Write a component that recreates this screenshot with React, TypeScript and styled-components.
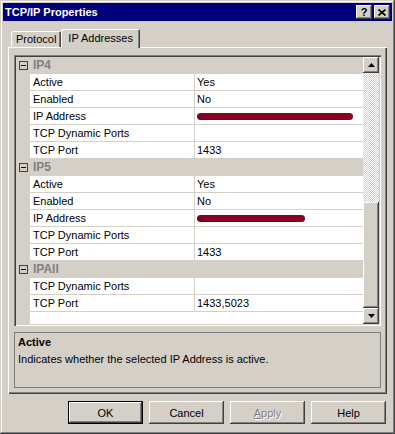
import React from "react";
import styled, { createGlobalStyle, css } from "styled-components";

const face = "#d4d0c8";
const shadow = "#808080";
const dark = "#404040";

const GlobalStyle = createGlobalStyle`
  html, body {
    margin: 0;
    padding: 0;
    background: ${face};
  }
  body {
    font-family: "Liberation Sans", Arial, sans-serif;
    font-size: 11px;
    color: #000;
  }
  * {
    box-sizing: border-box;
  }
`;

const raised = css`
  box-shadow: inset -1px -1px ${dark}, inset 1px 1px #fff,
    inset -2px -2px ${shadow}, inset 2px 2px ${face};
`;

const sunken = css`
  box-shadow: inset 1px 1px ${shadow}, inset 2px 2px ${dark},
    inset -1px -1px #fff, inset -2px -2px ${face};
`;

const Window = styled.div`
  width: 395px;
  height: 434px;
  padding: 3px;
  background: ${face};
  display: flex;
  flex-direction: column;
  box-shadow: inset -1px -1px ${dark}, inset 1px 1px ${face},
    inset -2px -2px ${shadow}, inset 2px 2px #fff;
`;

const TitleBar = styled.div`
  height: 18px;
  background: #00007c;
  color: #fff;
  display: flex;
  align-items: center;
  padding: 0 2px;
`;

const Title = styled.div`
  flex: 1;
  font-weight: bold;
  font-size: 11px;
`;

const CaptionButtons = styled.div`
  display: flex;
  gap: 2px;
`;

const CaptionButton = styled.div`
  width: 16px;
  height: 14px;
  background: ${face};
  ${raised};
  display: flex;
  align-items: center;
  justify-content: center;
  font-weight: bold;
  font-size: 11px;
  color: #000;
  line-height: 1;
`;

const Body = styled.div`
  flex: 1;
  display: flex;
  flex-direction: column;
  padding: 8px 5px 0;
`;

const TabStrip = styled.div`
  height: 18px;
  display: flex;
  align-items: flex-end;
  padding-left: 3px;
  position: relative;
  z-index: 1;
`;

const Tab = styled.div<{ $active?: boolean }>`
  height: ${(p) => (p.$active ? 19 : 16)}px;
  margin-bottom: ${(p) => (p.$active ? -1 : 0)}px;
  padding: ${(p) => (p.$active ? "3px 7px 0" : "2px 5px 0")};
  background: ${face};
  border-top-left-radius: 2px;
  border-top-right-radius: 2px;
  box-shadow: inset 1px 1px #fff, inset -1px 0 ${dark}, inset -2px 0 ${shadow};
  line-height: 13px;
  white-space: nowrap;
`;

const Panel = styled.div`
  height: 347px;
  background: ${face};
  padding: 8px 6px 3px;
  display: flex;
  flex-direction: column;
  gap: 6px;
  box-shadow: inset 1px 1px #fff, inset -1px -1px ${dark},
    inset -2px -2px ${shadow};
`;

const PropertyGrid = styled.div`
  height: 271px;
  padding: 2px;
  ${sunken};
  display: flex;
`;

const List = styled.div`
  flex: 1;
  overflow: hidden;
  background: linear-gradient(to right, ${face} 14px, #fff 14px);
`;

const Row = styled.div`
  display: grid;
  grid-template-columns: 14px 165px 1fr;
  height: 17px;
  line-height: 15px;
`;

const Gutter = styled.div`
  display: flex;
  align-items: center;
  justify-content: center;
`;

const NameCell = styled.div`
  background: #fff;
  border-bottom: 1px solid ${face};
  border-right: 1px solid ${face};
  padding: 1px 0 0 3px;
  white-space: nowrap;
`;

const ValueCell = styled.div`
  background: #fff;
  border-bottom: 1px solid ${face};
  padding: 1px 0 0 2px;
  display: flex;
  align-items: center;
  white-space: nowrap;
`;

const CategoryRow = styled(Row)`
  background: ${face};
`;

const CategoryLabel = styled.div`
  grid-column: 2 / 4;
  padding: 1px 0 0 3px;
  font-weight: bold;
  font-size: 12px;
  color: ${shadow};
`;

const Expander = styled.span`
  width: 9px;
  height: 9px;
  border: 1px solid ${dark};
  display: flex;
  align-items: center;
  justify-content: center;

  &::after {
    content: "";
    width: 5px;
    height: 1px;
    background: #000;
  }
`;

const Redacted = styled.span<{ $w: number }>`
  display: inline-block;
  width: ${(p) => p.$w}px;
  height: 7px;
  border-radius: 4px;
  background: #860020;
`;

const ScrollBar = styled.div`
  width: 16px;
  display: flex;
  flex-direction: column;
  background-color: #fff;
  background-image: conic-gradient(
    ${face} 25%,
    #fff 0 50%,
    ${face} 0 75%,
    #fff 0
  );
  background-size: 2px 2px;
`;

const ArrowButton = styled.div`
  height: 16px;
  background: ${face};
  ${raised};
  display: flex;
  align-items: center;
  justify-content: center;
`;

const Track = styled.div`
  flex: 1;
  display: flex;
  flex-direction: column;
  justify-content: flex-end;
`;

const Thumb = styled.div<{ $size: number }>`
  height: ${(p) => p.$size}px;
  background: ${face};
  ${raised};
`;

const Description = styled.div`
  height: 56px;
  border: 1px solid ${shadow};
  padding: 1px 3px 0;
  line-height: 17px;
`;

const DescTitle = styled.div`
  font-weight: bold;
`;

const ButtonRow = styled.div`
  display: flex;
  justify-content: flex-end;
  gap: 6px;
  margin-top: 7px;
  padding-right: 1px;
`;

const DialogButton = styled.div<{ $default?: boolean; $disabled?: boolean }>`
  width: 75px;
  height: 23px;
  background: ${face};
  display: flex;
  align-items: center;
  justify-content: center;
  ${(p) =>
    p.$default
      ? css`
          box-shadow: inset 0 0 0 1px #000, inset -2px -2px ${dark},
            inset 2px 2px #fff, inset -3px -3px ${shadow};
        `
      : raised};
  color: ${(p) => (p.$disabled ? shadow : "#000")};
  text-shadow: ${(p) => (p.$disabled ? "1px 1px 0 #fff" : "none")};
`;

type Prop = { name: string; value?: string; redact?: number };
type Section = { name: string; props: Prop[] };

const sections: Section[] = [
  {
    name: "IP4",
    props: [
      { name: "Active", value: "Yes" },
      { name: "Enabled", value: "No" },
      { name: "IP Address", redact: 156 },
      { name: "TCP Dynamic Ports" },
      { name: "TCP Port", value: "1433" },
    ],
  },
  {
    name: "IP5",
    props: [
      { name: "Active", value: "Yes" },
      { name: "Enabled", value: "No" },
      { name: "IP Address", redact: 108 },
      { name: "TCP Dynamic Ports" },
      { name: "TCP Port", value: "1433" },
    ],
  },
  {
    name: "IPAll",
    props: [
      { name: "TCP Dynamic Ports" },
      { name: "TCP Port", value: "1433,5023" },
    ],
  },
];

const Arrow = ({ down }: { down?: boolean }) => (
  <svg width="7" height="4" viewBox="0 0 7 4">
    <polygon points={down ? "0,0 7,0 3.5,4" : "3.5,0 7,4 0,4"} fill="#000" />
  </svg>
);

const App = () => {
  return (
    <>
      <GlobalStyle />
      <Window>
        <TitleBar>
          <Title>TCP/IP Properties</Title>
          <CaptionButtons>
            <CaptionButton>?</CaptionButton>
            <CaptionButton>
              <svg width="8" height="7" viewBox="0 0 8 7">
                <path d="M0.5 0.5 L7.5 6.5 M7.5 0.5 L0.5 6.5" stroke="#000" strokeWidth="1.6" />
              </svg>
            </CaptionButton>
          </CaptionButtons>
        </TitleBar>
        <Body>
          <TabStrip>
            <Tab>Protocol</Tab>
            <Tab $active>IP Addresses</Tab>
          </TabStrip>
          <Panel>
            <PropertyGrid>
              <List>
                {sections.map((s) => (
                  <React.Fragment key={s.name}>
                    <CategoryRow>
                      <Gutter>
                        <Expander />
                      </Gutter>
                      <CategoryLabel>{s.name}</CategoryLabel>
                    </CategoryRow>
                    {s.props.map((p, i) => (
                      <Row key={i}>
                        <Gutter />
                        <NameCell>{p.name}</NameCell>
                        <ValueCell>
                          {p.redact ? <Redacted $w={p.redact} /> : p.value}
                        </ValueCell>
                      </Row>
                    ))}
                  </React.Fragment>
                ))}
              </List>
              <ScrollBar>
                <ArrowButton>
                  <Arrow />
                </ArrowButton>
                <Track>
                  <Thumb $size={106} />
                </Track>
                <ArrowButton>
                  <Arrow down />
                </ArrowButton>
              </ScrollBar>
            </PropertyGrid>
            <Description>
              <DescTitle>Active</DescTitle>
              <div>Indicates whether the selected IP Address is active.</div>
            </Description>
          </Panel>
          <ButtonRow>
            <DialogButton $default>OK</DialogButton>
            <DialogButton>Cancel</DialogButton>
            <DialogButton $disabled>
              <span>
                <u>A</u>pply
              </span>
            </DialogButton>
            <DialogButton>Help</DialogButton>
          </ButtonRow>
        </Body>
      </Window>
    </>
  );
};

export default App;
